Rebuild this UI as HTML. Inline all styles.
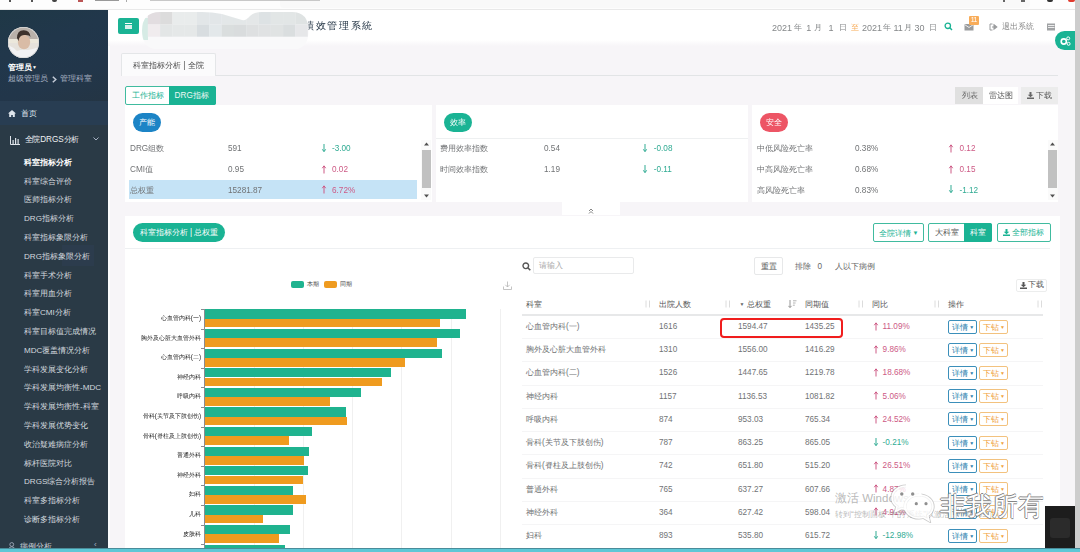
<!DOCTYPE html>
<html><head><meta charset="utf-8">
<style>
*{margin:0;padding:0;box-sizing:border-box}
html,body{width:1080px;height:552px;overflow:hidden;background:#f7f5f8;font-family:"Liberation Sans",sans-serif;color:#717375}
.a{position:absolute;white-space:nowrap}
.t{position:absolute;white-space:nowrap;line-height:12px;height:12px;font-size:8.2px;margin-top:1.1px}
#chrome{left:0;top:0;width:1080px;height:10px;background:#fdfdfd;border-bottom:1px solid #e9e9e9}
#side{left:0;top:10px;width:108px;height:542px;background:#2a3a46;overflow:hidden}
#prof{left:0;top:0;width:108px;height:90.5px;background:linear-gradient(160deg,#1f3846 0%,#21374b 35%,#22364a 70%,#243544 100%)}
#home{left:0;top:90.5px;width:108px;height:24.5px;background:#283d52}
.sm{position:absolute;left:24px;font-size:8.1px;line-height:12px;height:12px;color:#d3d9df;white-space:nowrap}
#nav{left:108px;top:10px;width:967px;height:36px;background:linear-gradient(#fff 0px,#fff 30px,#f7f5f8 36px)}
#rstrip{left:1074.5px;top:0px;width:5.5px;height:548px;background:#cdcdcd}
#task{left:0;top:547.5px;width:1080px;height:4.5px;background:#5ec7d6;border-top:1px solid #4a8c9a}
.card{position:absolute;top:105px;height:97px;background:#fff}
.pill{position:absolute;height:19px;line-height:19px;border-radius:10px;color:#fff;font-size:8.2px;text-align:center}
.up{color:#cd5a85}.dn{color:#1ab394}
.btn{position:absolute;border:1px solid #40bb9f;border-radius:2px;color:#1ab394;font-size:8.2px;text-align:center;background:#fff}
</style></head><body><div id="wrap" style="position:absolute;left:0;top:0;width:1080px;height:552px;filter:blur(0.45px)">
<div id="chrome" class="a"></div>
<div class="a" style="left:280px;top:0;width:750px;height:8px;background:#f9f9f9;border-radius:0 0 4px 4px"></div>
<div class="a" style="left:9px;top:0;width:1.5px;height:1.5px;background:#555"></div>
<div class="a" style="left:31px;top:0;width:2px;height:1.5px;background:#555"></div>
<div class="a" style="left:52px;top:0;width:5px;height:2px;background:#444;border-radius:0 0 3px 3px"></div>
<div class="a" style="left:78px;top:0;width:5px;height:1.5px;background:#b55"></div>
<div class="a" style="left:95px;top:0;width:24px;height:1.2px;background:#999"></div>
<div class="a" style="left:126px;top:0;width:1px;height:2px;background:#aaa"></div>
<div class="a" style="left:150px;top:0;width:170px;height:1px;background:#c8c8c8"></div>
<div class="a" style="left:1003px;top:0;width:2px;height:1.5px;background:#666"></div>
<div class="a" style="left:1021px;top:0;width:4px;height:1.5px;background:#666"></div>
<div class="a" style="left:1047px;top:0;width:6px;height:2px;background:#333;border-radius:0 0 3px 3px"></div>
<div class="a" style="left:1068px;top:0;width:7px;height:2px;background:#e03a2e;border-radius:0 0 4px 4px"></div>

<div id="side" class="a">
  <div id="prof" class="a"></div>
  <div id="home" class="a"></div>
  <svg class="a" style="left:8px;top:17px" width="31" height="31" viewBox="0 0 31 31">
    <defs><clipPath id="cc"><circle cx="15.5" cy="15.5" r="15.5"/></clipPath></defs>
    <g clip-path="url(#cc)">
      <rect width="31" height="31" fill="#e6e2dc"/>
      <rect x="0" y="0" width="31" height="12" fill="#b9b1aa"/>
      <rect x="0" y="12" width="31" height="4" fill="#ece8dc"/>
      <path d="M0 31V18Q5 20 9 24Q14 22 20 23Q26 22 31 20V31Z" fill="#f2f2f4"/>
      <ellipse cx="16" cy="15" rx="6.2" ry="7.3" fill="#d9bca6"/>
      <path d="M9 11Q9 3.5 15.5 3.2Q22 3 22.5 10Q21.5 7.5 16 8Q11 8.5 10.5 14Z" fill="#3d322c"/>
      <rect x="0" y="0" width="31" height="31" fill="none" stroke="#d8d8d8" stroke-width="1.5" rx="15.5"/>
    </g>
  </svg>
  <div class="a" style="left:8px;top:50.8px;font-size:8.2px;line-height:12px;color:#fff;font-weight:bold">管理员<span style="font-size:5px;font-weight:normal;vertical-align:1px">&#9660;</span></div>
  <div class="a" style="left:8px;top:62.8px;font-size:8px;line-height:12px;color:#a7b1c2">超级管理员</div><svg class="a" style="left:52px;top:65.5px" width="5" height="7" viewBox="0 0 5 7"><path d="M0.8 0.8L3.8 3.5L0.8 6.2" stroke="#c3cad6" stroke-width="1.5" fill="none"/></svg><div class="a" style="left:59.5px;top:62.8px;font-size:8px;line-height:12px;color:#a7b1c2">管理科室</div>
  <svg class="a" style="left:8px;top:100px" width="8" height="7" viewBox="0 0 8 7"><path d="M4 0L0 3.5h1.2V7h2V5h1.6v2h2V3.5H8Z" fill="#dfe5ec"/></svg>
  <div class="a" style="left:21px;top:98px;font-size:8.2px;line-height:12px;color:#dfe5ec">首页</div>
  <svg class="a" style="left:10px;top:126px" width="10" height="9" viewBox="0 0 10 9"><path d="M0.5 0v8.5H10" stroke="#dfe4ea" stroke-width="1" fill="none"/><rect x="2.5" y="4" width="1.2" height="4" fill="#dfe4ea"/><rect x="5" y="2" width="1.2" height="6" fill="#dfe4ea"/><rect x="7.5" y="3" width="1.2" height="5" fill="#dfe4ea"/></svg>
  <div class="a" style="left:24.5px;top:124.3px;font-size:8.2px;line-height:12px;color:#eef0f3;letter-spacing:-0.1px">全院DRGS分析</div>
  <svg class="a" style="left:93px;top:127px" width="6" height="4" viewBox="0 0 6 4"><path d="M0.5 0.5L3 3L5.5 0.5" stroke="#a7b1c2" stroke-width="1" fill="none"/></svg>
  <div class="a" style="left:62px;top:234.5px;width:32px;height:21.5px;background:#2c3c4d"></div>
  <div class="sm" style="top:146.80px;color:#fff;font-weight:bold">科室指标分析</div>
  <div class="sm" style="top:165.60px">科室综合评价</div>
  <div class="sm" style="top:184.40px">医师指标分析</div>
  <div class="sm" style="top:203.20px">DRG指标分析</div>
  <div class="sm" style="top:222.00px">科室指标象限分析</div>
  <div class="sm" style="top:240.80px">DRG指标象限分析</div>
  <div class="sm" style="top:259.60px">科室手术分析</div>
  <div class="sm" style="top:278.40px">科室用血分析</div>
  <div class="sm" style="top:297.20px">科室CMI分析</div>
  <div class="sm" style="top:316.00px">科室目标值完成情况</div>
  <div class="sm" style="top:334.80px">MDC覆盖情况分析</div>
  <div class="sm" style="top:353.60px">学科发展变化分析</div>
  <div class="sm" style="top:372.40px">学科发展均衡性-MDC</div>
  <div class="sm" style="top:391.20px">学科发展均衡性-科室</div>
  <div class="sm" style="top:410.00px">学科发展优势变化</div>
  <div class="sm" style="top:428.80px">收治疑难病症分析</div>
  <div class="sm" style="top:447.60px">标杆医院对比</div>
  <div class="sm" style="top:466.40px">DRGS综合分析报告</div>
  <div class="sm" style="top:485.20px">科室多指标分析</div>
  <div class="sm" style="top:504.00px">诊断多指标分析</div>
  <svg class="a" style="left:8px;top:532px" width="7.5" height="7.5" viewBox="0 0 9 9"><circle cx="4.5" cy="3" r="2.3" stroke="#a7b1c2" fill="none"/><path d="M0.8 9Q1 5.8 4.5 5.8Q8 5.8 8.2 9" stroke="#a7b1c2" fill="none"/></svg>
  <div class="a" style="left:19.5px;top:530px;font-size:8.3px;line-height:12px;color:#cfd5dc">病例分析</div>
  <div class="a" style="left:94px;top:529px;font-size:8px;line-height:12px;color:#a7b1c2">&#x2039;</div>
</div>
<div id="nav" class="a"></div>
<!-- hamburger -->
<div class="a" style="left:118px;top:18px;width:20.5px;height:16px;background:#1ab394;border-radius:2px"></div>
<div class="a" style="left:124.9px;top:22.6px;width:6.9px;height:1.4px;background:#fff"></div>
<div class="a" style="left:124.9px;top:25.3px;width:6.9px;height:3.7px;background:#d9efea"></div>
<div class="a" style="left:304.3px;top:19px;font-size:9.5px;line-height:14px;color:#263747;letter-spacing:1.6px">績效管理系統</div>
<!-- mosaic blur -->
<svg class="a" style="left:141.7px;top:11.7px" width="167" height="37.5" viewBox="0 0 167 37.5">
 <defs><clipPath id="mc"><path d="M18 0H60Q70 0 80 2Q90 5 100 8Q104 9 108 4Q112 0 120 0H150Q166.6 0 166.6 18.75Q166.6 37.5 150 37.5H18Q0 37.5 0 18.75Q0 0 18 0Z"/></clipPath>
 <filter id="mb"><feGaussianBlur stdDeviation="0.5"/></filter></defs>
 <g clip-path="url(#mc)" filter="url(#mb)">
  <rect width="167" height="37.5" fill="#f9f9fa"/>
  <rect x="0" y="6" width="6" height="22" fill="#d6ebe5"/>
  <rect x="5.8" y="0" width="12.4" height="12.5" fill="#e2dde0"/>
  <rect x="5.8" y="12.5" width="12.4" height="12.2" fill="#f0ecee"/>
  <rect x="18.1" y="0" width="12.4" height="12.5" fill="#dcdcdc"/>
  <rect x="18.1" y="12.5" width="12.4" height="12.2" fill="#e3e6e6"/>
  <rect x="30.4" y="0" width="12.4" height="12.5" fill="#e9ecec"/>
  <rect x="30.4" y="12.5" width="12.4" height="12.2" fill="#e5e8e8"/>
  <rect x="42.7" y="0" width="12.4" height="12.5" fill="#e9ecec"/>
  <rect x="42.7" y="12.5" width="12.4" height="12.2" fill="#e5e8e8"/>
  <rect x="55.0" y="0" width="12.4" height="12.5" fill="#e2e6e8"/>
  <rect x="55.0" y="12.5" width="12.4" height="12.2" fill="#d8dde0"/>
  <rect x="67.3" y="0" width="12.4" height="12.5" fill="#e2e6e8"/>
  <rect x="67.3" y="12.5" width="12.4" height="12.2" fill="#e3e8ea"/>
  <rect x="79.6" y="0" width="12.4" height="12.5" fill="#e3e7e8"/>
  <rect x="79.6" y="12.5" width="12.4" height="12.2" fill="#dadede"/>
  <rect x="91.9" y="0" width="12.4" height="12.5" fill="#e3e7e8"/>
  <rect x="91.9" y="12.5" width="12.4" height="12.2" fill="#d9dcdd"/>
  <rect x="104.2" y="0" width="12.4" height="12.5" fill="#e4e7e8"/>
  <rect x="104.2" y="12.5" width="12.4" height="12.2" fill="#dee0e1"/>
  <rect x="116.5" y="0" width="12.4" height="12.5" fill="#dde2e4"/>
  <rect x="116.5" y="12.5" width="12.4" height="12.2" fill="#e0e2e3"/>
  <rect x="128.8" y="0" width="12.4" height="12.5" fill="#e2e6e6"/>
  <rect x="128.8" y="12.5" width="12.4" height="12.2" fill="#e0e3e3"/>
  <rect x="141.1" y="0" width="12.4" height="12.5" fill="#e2e6e6"/>
  <rect x="141.1" y="12.5" width="12.4" height="12.2" fill="#dadedf"/>
  <rect x="153.4" y="0" width="12.4" height="12.5" fill="#dfe3e3"/>
  <rect x="153.4" y="12.5" width="12.4" height="12.2" fill="#e6e7e9"/>
 </g>
</svg>

<!-- date -->
<div class="a" style="left:772.0px;top:21.5px;font-size:9px;line-height:12px;color:#85888a">2021</div>
<div class="a" style="left:793.5px;top:21.5px;font-size:8.2px;line-height:12px;color:#85888a">年</div>
<div class="a" style="left:806.2px;top:21.5px;font-size:9px;line-height:12px;color:#85888a">1</div>
<div class="a" style="left:814.3px;top:21.5px;font-size:8.2px;line-height:12px;color:#85888a">月</div>
<div class="a" style="left:828.4px;top:21.5px;font-size:9px;line-height:12px;color:#85888a">1</div>
<div class="a" style="left:838.5px;top:21.5px;font-size:8.2px;line-height:12px;color:#85888a">日</div>
<div class="a" style="left:851.3px;top:21.5px;font-size:8.2px;line-height:12px;color:#f8ac59">至</div>
<div class="a" style="left:862.0px;top:21.5px;font-size:9px;line-height:12px;color:#85888a">2021</div>
<div class="a" style="left:882.5px;top:21.5px;font-size:8.2px;line-height:12px;color:#85888a">年</div>
<div class="a" style="left:893.5px;top:21.5px;font-size:9px;line-height:12px;color:#85888a">11</div>
<div class="a" style="left:903.9px;top:21.5px;font-size:8.2px;line-height:12px;color:#85888a">月</div>
<div class="a" style="left:914.5px;top:21.5px;font-size:9px;line-height:12px;color:#85888a">30</div>
<div class="a" style="left:929.0px;top:21.5px;font-size:8.2px;line-height:12px;color:#85888a">日</div>
<svg class="a" style="left:944px;top:22px" width="9" height="9" viewBox="0 0 9 9"><circle cx="3.8" cy="3.8" r="2.7" stroke="#1ab394" stroke-width="1.3" fill="none"/><path d="M5.8 5.8L8 8" stroke="#1ab394" stroke-width="1.5"/></svg>
<svg class="a" style="left:964px;top:23px" width="10" height="8" viewBox="0 0 10 8"><rect x="0.5" y="1" width="9" height="6.5" fill="#9a9c9e"/><path d="M0.5 1.5L5 4.5L9.5 1.5" stroke="#fff" stroke-width="0.8" fill="none"/></svg>
<div class="a" style="left:969.2px;top:16px;width:9.4px;height:8.8px;background:#f8ac59;border-radius:1px;color:#fff;font-size:7px;line-height:8.8px;text-align:center;letter-spacing:-0.5px">11</div>
<svg class="a" style="left:989px;top:22.5px" width="9" height="8" viewBox="0 0 9 8"><path d="M3.5 1H1V7H3.5" stroke="#9a9c9e" stroke-width="1" fill="none"/><path d="M3 4H6.5M5 1.8L7.8 4L5 6.2Z" stroke="#9a9c9e" stroke-width="1.1" fill="#9a9c9e"/></svg>
<div class="a" style="left:1001.5px;top:20.5px;font-size:8.2px;line-height:12px;color:#888">退出系统</div>
<svg class="a" style="left:1046.5px;top:22.5px" width="8.5" height="8" viewBox="0 0 8.5 8"><rect x="0" y="0.5" width="8.5" height="7" fill="#a0a2a4"/><rect x="1" y="2" width="6.5" height="0.8" fill="#fff"/><rect x="1" y="4.2" width="6.5" height="0.8" fill="#fff"/></svg>
<div class="a" style="left:1055px;top:31px;width:22px;height:19px;background:#1ab394;border-radius:10px 0 0 10px"></div>
<svg class="a" style="left:1060px;top:35.5px" width="11" height="10" viewBox="0 0 11 10"><circle cx="3.8" cy="5.5" r="2.6" stroke="#fff" stroke-width="1.6" fill="none"/><circle cx="8.2" cy="2.4" r="1.5" stroke="#fff" stroke-width="1" fill="none"/><circle cx="8.6" cy="7.8" r="1.5" stroke="#fff" stroke-width="1" fill="none"/></svg>
<div id="rstrip" class="a"></div>
<div class="a" style="left:108px;top:46px;width:2px;height:502px;background:#fbfcfe"></div>

<!-- cards -->
<div class="a" style="left:121px;top:53px;width:95px;height:23px;background:#fbfbfc;border:1px solid #e4e6e8;border-bottom:none;border-radius:2px 2px 0 0"></div>
<div class="a" style="left:216px;top:75px;width:842px;height:1px;background:#e2e4e6"></div>
<div class="a" style="left:133px;top:60px;font-size:8.2px;line-height:12px;color:#4a4a4a">科室指标分析 | 全院</div>
<div class="a" style="left:125px;top:86px;width:91px;height:18.5px;border:1px solid #40bb9f;border-radius:2px;background:#fff"></div>
<div class="a" style="left:169px;top:86px;width:47px;height:18.5px;background:#1ab394;border-radius:0 2px 2px 0"></div>
<div class="a" style="left:131.8px;top:90.2px;font-size:8.2px;line-height:12px;color:#1ab394">工作指标</div>
<div class="a" style="left:174.6px;top:90.2px;font-size:8.2px;line-height:12px;color:#eef8f5">DRG指标</div>
<!-- right btn -->
<div class="a" style="left:955px;top:86.5px;width:28px;height:17.5px;background:#e0e0e0"></div>
<div class="a" style="left:983px;top:86.5px;width:35px;height:17.5px;background:#fff"></div>
<div class="a" style="left:1021px;top:86.5px;width:37px;height:17.5px;background:#ececec"></div>
<div class="a" style="left:961.5px;top:89.8px;font-size:8.2px;line-height:12px;color:#666">列表</div>
<div class="a" style="left:988.5px;top:89.8px;font-size:8.2px;line-height:12px;color:#555">雷达图</div>
<svg class="a" style="left:1027px;top:91.5px" width="7" height="7" viewBox="0 0 7 7"><path d="M2.5 0h2v2.8h1.8L3.5 5.2L0.7 2.8h1.8Z M0 5.5h7V7H0Z" fill="#666"/></svg>
<div class="a" style="left:1036px;top:89.5px;font-size:8.2px;line-height:12px;color:#555">下载</div>

<div class="card" style="left:125px;width:307px"></div>
<div class="card" style="left:436px;width:312px"></div>
<div class="card" style="left:752px;width:306px"></div>
<div class="pill" style="left:133px;top:113px;width:28px;background:#1c84c6">产能</div>
<div class="pill" style="left:444px;top:113px;width:28px;background:#1ab394">效率</div>
<div class="pill" style="left:760px;top:113px;width:28px;background:#ed5565">安全</div>
<div class="a" style="left:436px;top:138px;width:312px;height:1px;background:#eef0f1"></div>
<div class="a" style="left:128.5px;top:179.7px;width:288px;height:19.5px;background:#c5e3f6"></div>
<div class="t" style="left:130px;top:142.4px">DRG组数</div><div class="t" style="left:228px;top:142.4px">591</div><svg class="a" style="left:320.7px;top:144.20px" width="6" height="9" viewBox="0 0 6 9"><path d="M3 0V7.3M1.3 5.3L3 7.7L4.7 5.3" stroke="#30ab93" stroke-width="1" fill="none"/></svg><div class="t" style="left:332px;top:142.4px;color:#30ab93">-3.00</div><div class="t" style="left:130px;top:163.0px">CMI值</div><div class="t" style="left:228px;top:163.0px">0.95</div><svg class="a" style="left:320.7px;top:164.80px" width="6" height="9" viewBox="0 0 6 9"><path d="M3 8.5V1.2M1.3 3.2L3 0.8L4.7 3.2" stroke="#cd5a85" stroke-width="1" fill="none"/></svg><div class="t" style="left:332px;top:163.0px;color:#cd5a85">0.02</div><div class="t" style="left:130px;top:183.5px">总权重</div><div class="t" style="left:228px;top:183.5px">15281.87</div><svg class="a" style="left:320.7px;top:185.30px" width="6" height="9" viewBox="0 0 6 9"><path d="M3 8.5V1.2M1.3 3.2L3 0.8L4.7 3.2" stroke="#cd5a85" stroke-width="1" fill="none"/></svg><div class="t" style="left:332px;top:183.5px;color:#cd5a85">6.72%</div><div class="t" style="left:440px;top:142.4px">费用效率指数</div><div class="t" style="left:544px;top:142.4px">0.54</div><svg class="a" style="left:642.3px;top:144.20px" width="6" height="9" viewBox="0 0 6 9"><path d="M3 0V7.3M1.3 5.3L3 7.7L4.7 5.3" stroke="#30ab93" stroke-width="1" fill="none"/></svg><div class="t" style="left:653.8px;top:142.4px;color:#30ab93">-0.08</div><div class="t" style="left:440px;top:163.0px">时间效率指数</div><div class="t" style="left:544px;top:163.0px">1.19</div><svg class="a" style="left:642.3px;top:164.80px" width="6" height="9" viewBox="0 0 6 9"><path d="M3 0V7.3M1.3 5.3L3 7.7L4.7 5.3" stroke="#30ab93" stroke-width="1" fill="none"/></svg><div class="t" style="left:653.8px;top:163.0px;color:#30ab93">-0.11</div><div class="t" style="left:756.5px;top:142.4px">中低风险死亡率</div><div class="t" style="left:855px;top:142.4px">0.38%</div><svg class="a" style="left:947.5px;top:144.20px" width="6" height="9" viewBox="0 0 6 9"><path d="M3 8.5V1.2M1.3 3.2L3 0.8L4.7 3.2" stroke="#cd5a85" stroke-width="1" fill="none"/></svg><div class="t" style="left:959.5px;top:142.4px;color:#cd5a85">0.12</div><div class="t" style="left:756.5px;top:163.0px">中高风险死亡率</div><div class="t" style="left:855px;top:163.0px">0.68%</div><svg class="a" style="left:947.5px;top:164.80px" width="6" height="9" viewBox="0 0 6 9"><path d="M3 8.5V1.2M1.3 3.2L3 0.8L4.7 3.2" stroke="#cd5a85" stroke-width="1" fill="none"/></svg><div class="t" style="left:959.5px;top:163.0px;color:#cd5a85">0.15</div><div class="t" style="left:756.5px;top:183.5px">高风险死亡率</div><div class="t" style="left:855px;top:183.5px">0.83%</div><svg class="a" style="left:947.5px;top:185.30px" width="6" height="9" viewBox="0 0 6 9"><path d="M3 0V7.3M1.3 5.3L3 7.7L4.7 5.3" stroke="#30ab93" stroke-width="1" fill="none"/></svg><div class="t" style="left:959.5px;top:183.5px;color:#30ab93">-1.12</div>
<!-- scrollbars -->
<div class="a" style="left:421px;top:140px;width:10px;height:60px;background:#fafafa"></div>
<div class="a" style="left:421.5px;top:149.5px;width:9px;height:38.5px;background:#c1c1c1"></div>
<svg class="a" style="left:423.5px;top:142px" width="5" height="4"><path d="M0 3.5L2.5 0.5L5 3.5Z" fill="#505050"/></svg>
<svg class="a" style="left:423.5px;top:194px" width="5" height="4"><path d="M0 0.5L2.5 3.5L5 0.5Z" fill="#505050"/></svg>
<div class="a" style="left:1047.5px;top:140px;width:10px;height:60px;background:#fafafa"></div>
<div class="a" style="left:1048px;top:150px;width:9px;height:37.5px;background:#c1c1c1"></div>
<svg class="a" style="left:1050px;top:142px" width="5" height="4"><path d="M0 3.5L2.5 0.5L5 3.5Z" fill="#505050"/></svg>
<svg class="a" style="left:1050px;top:194px" width="5" height="4"><path d="M0 0.5L2.5 3.5L5 0.5Z" fill="#505050"/></svg>
<!-- collapse tab -->
<div class="a" style="left:562px;top:202px;width:58px;height:13px;background:#fff"></div>
<svg class="a" style="left:588px;top:208px" width="6" height="6" viewBox="0 0 6 6"><path d="M1 3L3 1L5 3M1 5.5L3 3.5L5 5.5" stroke="#777" stroke-width="0.9" fill="none"/></svg>
<!-- chart panel -->
<div class="a" style="left:125px;top:216px;width:934.5px;height:332px;background:#fff"></div>
<!-- panel header -->
<div class="pill" style="left:133.3px;top:223.2px;width:91.5px;height:19px;background:#1ab394;font-size:8.2px">科室指标分析 | 总权重</div>
<div class="a" style="left:125px;top:248px;width:925px;height:1px;background:#eef0f2"></div>
<div class="btn" style="left:873.3px;top:223.3px;width:50.6px;height:18.5px;line-height:18.6px">全院详情<span style="font-size:6px;vertical-align:1px"> &#9660;</span></div>
<div class="btn" style="left:928px;top:223.3px;width:64px;height:18.5px;line-height:18.6px;text-align:left;padding-left:5.8px;color:#555">大科室</div>
<div class="a" style="left:964px;top:223.3px;width:28px;height:18.5px;background:#1ab394;border-radius:0 2px 2px 0;color:#fff;font-size:8.2px;line-height:19.5px;text-align:center">科室</div>
<div class="btn" style="left:996.7px;top:223.3px;width:54px;height:18.5px;line-height:18.6px;padding-left:9px">全部指标</div>
<svg class="a" style="left:1002.5px;top:229px" width="7" height="7" viewBox="0 0 7 7"><path d="M2.5 0h2v2.8h1.8L3.5 5.2L0.7 2.8h1.8Z M0 5.6h7V7H0Z" fill="#1ab394"/></svg>
<!-- search -->
<svg class="a" style="left:521.5px;top:261.5px" width="9" height="9" viewBox="0 0 9 9"><circle cx="3.8" cy="3.8" r="2.8" stroke="#555" stroke-width="1.4" fill="none"/><path d="M5.8 5.8L8.3 8.3" stroke="#555" stroke-width="1.6"/></svg>
<div class="a" style="left:533px;top:256.5px;width:101px;height:17.5px;border:1px solid #e9eaeb;border-radius:2px"></div>
<div class="a" style="left:539px;top:260.2px;font-size:8.2px;line-height:12px;color:#a9a9a9">请输入</div>
<div class="a" style="left:754.4px;top:256.5px;width:29px;height:18.5px;border:1px solid #e7e8e9;border-radius:2px"></div>
<div class="a" style="left:760.5px;top:261.2px;font-size:8.2px;line-height:12px;color:#555">重置</div>
<div class="a" style="left:794.6px;top:261.2px;font-size:8.2px;line-height:12px;color:#666">排除</div>
<div class="a" style="left:817.4px;top:261.2px;font-size:8.2px;line-height:12px;color:#666">0</div>
<div class="a" style="left:835px;top:261.2px;font-size:8.2px;line-height:12px;color:#666">人以下病例</div>
<div class="a" style="left:1016px;top:278.5px;width:31.4px;height:13px;border:1px solid #eceded;border-radius:2px"></div>
<svg class="a" style="left:1019.5px;top:281.5px" width="7" height="7" viewBox="0 0 7 7"><path d="M2.5 0h2v2.8h1.8L3.5 5.2L0.7 2.8h1.8Z M0 5.6h7V7H0Z" fill="#555"/></svg>
<div class="a" style="left:1028px;top:279px;font-size:8.2px;line-height:12px;color:#555">下载</div>

<div class="a" style="left:522px;top:314px;width:521px;height:1.5px;background:#e7e8e9"></div>
<div class="t" style="left:526px;top:297.6px;color:#555">科室</div>
<div class="t" style="left:659px;top:297.6px;color:#555">出院人数</div>
<div class="t" style="left:747.4px;top:297.6px;color:#555">总权重</div>
<div class="t" style="left:805px;top:297.6px;color:#555">同期值</div>
<div class="t" style="left:872.4px;top:297.6px;color:#555">同比</div>
<div class="t" style="left:948.3px;top:297.6px;color:#555">操作</div>
<div class="a" style="left:739.5px;top:301px;font-size:5px;line-height:6px;color:#666">&#9660;</div>
<svg class="a" style="left:644px;top:300px" width="8" height="8" viewBox="0 0 8 8"><path d="M2 0.5V7.5M5.5 0.5V7.5" stroke="#dcdcdc" stroke-width="1"/></svg>
<svg class="a" style="left:723.5px;top:300px" width="8" height="8" viewBox="0 0 8 8"><path d="M2 0.5V7.5M5.5 0.5V7.5" stroke="#dcdcdc" stroke-width="1"/></svg>
<svg class="a" style="left:857px;top:300px" width="8" height="8" viewBox="0 0 8 8"><path d="M2 0.5V7.5M5.5 0.5V7.5" stroke="#dcdcdc" stroke-width="1"/></svg>
<svg class="a" style="left:932.5px;top:300px" width="8" height="8" viewBox="0 0 8 8"><path d="M2 0.5V7.5M5.5 0.5V7.5" stroke="#dcdcdc" stroke-width="1"/></svg>
<svg class="a" style="left:1036px;top:300px" width="8" height="8" viewBox="0 0 8 8"><path d="M2 0.5V7.5M5.5 0.5V7.5" stroke="#dcdcdc" stroke-width="1"/></svg>
<svg class="a" style="left:788.3px;top:300px" width="9" height="8" viewBox="0 0 9 8"><path d="M2 0V7.5M0.3 5.8L2 7.5L3.7 5.8" stroke="#8a8a8a" stroke-width="0.9" fill="none"/><path d="M5 0.8H8.5M5 3H7.6M5 5.2H6.8" stroke="#aaa" stroke-width="0.9"/></svg>
<div class="t" style="left:526px;top:319.80px">心血管内科(一)</div>
<div class="t" style="left:659px;top:319.80px">1616</div>
<div class="t" style="left:738px;top:319.80px">1594.47</div>
<div class="t" style="left:805px;top:319.80px">1435.25</div>
<svg class="a" style="left:873.0px;top:321.60px" width="6" height="9" viewBox="0 0 6 9"><path d="M3 8.5V1.2M1.3 3.2L3 0.8L4.7 3.2" stroke="#cd5a85" stroke-width="1" fill="none"/></svg>
<div class="t" style="left:882.6px;top:319.80px;color:#cd5a85">11.09%</div>
<div class="a" style="left:948.3px;top:319.50px;width:28.4px;height:14px;border:1px solid #3b8fba;border-radius:2px;color:#2a7fae;font-size:8.2px;line-height:12px;padding-left:2.5px">详情<span style="font-size:5px;vertical-align:1px"> &#9660;</span></div>
<div class="a" style="left:979px;top:319.50px;width:28.7px;height:14px;border:1px solid #f3c27e;border-radius:2px;color:#f0a23c;font-size:8.2px;line-height:12px;padding-left:2.5px">下钻<span style="font-size:5px;vertical-align:1px"> &#9660;</span></div>
<div class="a" style="left:522px;top:338.23px;width:521px;height:1px;background:#f5f5f6"></div>
<div class="t" style="left:526px;top:343.03px">胸外及心脏大血管外科</div>
<div class="t" style="left:659px;top:343.03px">1310</div>
<div class="t" style="left:738px;top:343.03px">1556.00</div>
<div class="t" style="left:805px;top:343.03px">1416.29</div>
<svg class="a" style="left:873.0px;top:344.83px" width="6" height="9" viewBox="0 0 6 9"><path d="M3 8.5V1.2M1.3 3.2L3 0.8L4.7 3.2" stroke="#cd5a85" stroke-width="1" fill="none"/></svg>
<div class="t" style="left:882.6px;top:343.03px;color:#cd5a85">9.86%</div>
<div class="a" style="left:948.3px;top:342.73px;width:28.4px;height:14px;border:1px solid #3b8fba;border-radius:2px;color:#2a7fae;font-size:8.2px;line-height:12px;padding-left:2.5px">详情<span style="font-size:5px;vertical-align:1px"> &#9660;</span></div>
<div class="a" style="left:979px;top:342.73px;width:28.7px;height:14px;border:1px solid #f3c27e;border-radius:2px;color:#f0a23c;font-size:8.2px;line-height:12px;padding-left:2.5px">下钻<span style="font-size:5px;vertical-align:1px"> &#9660;</span></div>
<div class="a" style="left:522px;top:361.46px;width:521px;height:1px;background:#f5f5f6"></div>
<div class="t" style="left:526px;top:366.26px">心血管内科(二)</div>
<div class="t" style="left:659px;top:366.26px">1526</div>
<div class="t" style="left:738px;top:366.26px">1447.65</div>
<div class="t" style="left:805px;top:366.26px">1219.78</div>
<svg class="a" style="left:873.0px;top:368.06px" width="6" height="9" viewBox="0 0 6 9"><path d="M3 8.5V1.2M1.3 3.2L3 0.8L4.7 3.2" stroke="#cd5a85" stroke-width="1" fill="none"/></svg>
<div class="t" style="left:882.6px;top:366.26px;color:#cd5a85">18.68%</div>
<div class="a" style="left:948.3px;top:365.96px;width:28.4px;height:14px;border:1px solid #3b8fba;border-radius:2px;color:#2a7fae;font-size:8.2px;line-height:12px;padding-left:2.5px">详情<span style="font-size:5px;vertical-align:1px"> &#9660;</span></div>
<div class="a" style="left:979px;top:365.96px;width:28.7px;height:14px;border:1px solid #f3c27e;border-radius:2px;color:#f0a23c;font-size:8.2px;line-height:12px;padding-left:2.5px">下钻<span style="font-size:5px;vertical-align:1px"> &#9660;</span></div>
<div class="a" style="left:522px;top:384.69px;width:521px;height:1px;background:#f5f5f6"></div>
<div class="t" style="left:526px;top:389.49px">神经内科</div>
<div class="t" style="left:659px;top:389.49px">1157</div>
<div class="t" style="left:738px;top:389.49px">1136.53</div>
<div class="t" style="left:805px;top:389.49px">1081.82</div>
<svg class="a" style="left:873.0px;top:391.29px" width="6" height="9" viewBox="0 0 6 9"><path d="M3 8.5V1.2M1.3 3.2L3 0.8L4.7 3.2" stroke="#cd5a85" stroke-width="1" fill="none"/></svg>
<div class="t" style="left:882.6px;top:389.49px;color:#cd5a85">5.06%</div>
<div class="a" style="left:948.3px;top:389.19px;width:28.4px;height:14px;border:1px solid #3b8fba;border-radius:2px;color:#2a7fae;font-size:8.2px;line-height:12px;padding-left:2.5px">详情<span style="font-size:5px;vertical-align:1px"> &#9660;</span></div>
<div class="a" style="left:979px;top:389.19px;width:28.7px;height:14px;border:1px solid #f3c27e;border-radius:2px;color:#f0a23c;font-size:8.2px;line-height:12px;padding-left:2.5px">下钻<span style="font-size:5px;vertical-align:1px"> &#9660;</span></div>
<div class="a" style="left:522px;top:407.92px;width:521px;height:1px;background:#f5f5f6"></div>
<div class="t" style="left:526px;top:412.72px">呼吸内科</div>
<div class="t" style="left:659px;top:412.72px">874</div>
<div class="t" style="left:738px;top:412.72px">953.03</div>
<div class="t" style="left:805px;top:412.72px">765.34</div>
<svg class="a" style="left:873.0px;top:414.52px" width="6" height="9" viewBox="0 0 6 9"><path d="M3 8.5V1.2M1.3 3.2L3 0.8L4.7 3.2" stroke="#cd5a85" stroke-width="1" fill="none"/></svg>
<div class="t" style="left:882.6px;top:412.72px;color:#cd5a85">24.52%</div>
<div class="a" style="left:948.3px;top:412.42px;width:28.4px;height:14px;border:1px solid #3b8fba;border-radius:2px;color:#2a7fae;font-size:8.2px;line-height:12px;padding-left:2.5px">详情<span style="font-size:5px;vertical-align:1px"> &#9660;</span></div>
<div class="a" style="left:979px;top:412.42px;width:28.7px;height:14px;border:1px solid #f3c27e;border-radius:2px;color:#f0a23c;font-size:8.2px;line-height:12px;padding-left:2.5px">下钻<span style="font-size:5px;vertical-align:1px"> &#9660;</span></div>
<div class="a" style="left:522px;top:431.15px;width:521px;height:1px;background:#f5f5f6"></div>
<div class="t" style="left:526px;top:435.95px">骨科(关节及下肢创伤)</div>
<div class="t" style="left:659px;top:435.95px">787</div>
<div class="t" style="left:738px;top:435.95px">863.25</div>
<div class="t" style="left:805px;top:435.95px">865.05</div>
<svg class="a" style="left:873.0px;top:437.75px" width="6" height="9" viewBox="0 0 6 9"><path d="M3 0V7.3M1.3 5.3L3 7.7L4.7 5.3" stroke="#30ab93" stroke-width="1" fill="none"/></svg>
<div class="t" style="left:882.6px;top:435.95px;color:#30ab93">-0.21%</div>
<div class="a" style="left:948.3px;top:435.65px;width:28.4px;height:14px;border:1px solid #3b8fba;border-radius:2px;color:#2a7fae;font-size:8.2px;line-height:12px;padding-left:2.5px">详情<span style="font-size:5px;vertical-align:1px"> &#9660;</span></div>
<div class="a" style="left:979px;top:435.65px;width:28.7px;height:14px;border:1px solid #f3c27e;border-radius:2px;color:#f0a23c;font-size:8.2px;line-height:12px;padding-left:2.5px">下钻<span style="font-size:5px;vertical-align:1px"> &#9660;</span></div>
<div class="a" style="left:522px;top:454.38px;width:521px;height:1px;background:#f5f5f6"></div>
<div class="t" style="left:526px;top:459.18px">骨科(脊柱及上肢创伤)</div>
<div class="t" style="left:659px;top:459.18px">742</div>
<div class="t" style="left:738px;top:459.18px">651.80</div>
<div class="t" style="left:805px;top:459.18px">515.20</div>
<svg class="a" style="left:873.0px;top:460.98px" width="6" height="9" viewBox="0 0 6 9"><path d="M3 8.5V1.2M1.3 3.2L3 0.8L4.7 3.2" stroke="#cd5a85" stroke-width="1" fill="none"/></svg>
<div class="t" style="left:882.6px;top:459.18px;color:#cd5a85">26.51%</div>
<div class="a" style="left:948.3px;top:458.88px;width:28.4px;height:14px;border:1px solid #3b8fba;border-radius:2px;color:#2a7fae;font-size:8.2px;line-height:12px;padding-left:2.5px">详情<span style="font-size:5px;vertical-align:1px"> &#9660;</span></div>
<div class="a" style="left:979px;top:458.88px;width:28.7px;height:14px;border:1px solid #f3c27e;border-radius:2px;color:#f0a23c;font-size:8.2px;line-height:12px;padding-left:2.5px">下钻<span style="font-size:5px;vertical-align:1px"> &#9660;</span></div>
<div class="a" style="left:522px;top:477.61px;width:521px;height:1px;background:#f5f5f6"></div>
<div class="t" style="left:526px;top:482.41px">普通外科</div>
<div class="t" style="left:659px;top:482.41px">765</div>
<div class="t" style="left:738px;top:482.41px">637.27</div>
<div class="t" style="left:805px;top:482.41px">607.66</div>
<svg class="a" style="left:873.0px;top:484.21px" width="6" height="9" viewBox="0 0 6 9"><path d="M3 8.5V1.2M1.3 3.2L3 0.8L4.7 3.2" stroke="#cd5a85" stroke-width="1" fill="none"/></svg>
<div class="t" style="left:882.6px;top:482.41px;color:#cd5a85">4.87%</div>
<div class="a" style="left:948.3px;top:482.11px;width:28.4px;height:14px;border:1px solid #3b8fba;border-radius:2px;color:#2a7fae;font-size:8.2px;line-height:12px;padding-left:2.5px">详情<span style="font-size:5px;vertical-align:1px"> &#9660;</span></div>
<div class="a" style="left:979px;top:482.11px;width:28.7px;height:14px;border:1px solid #f3c27e;border-radius:2px;color:#f0a23c;font-size:8.2px;line-height:12px;padding-left:2.5px">下钻<span style="font-size:5px;vertical-align:1px"> &#9660;</span></div>
<div class="a" style="left:522px;top:500.84px;width:521px;height:1px;background:#f5f5f6"></div>
<div class="t" style="left:526px;top:505.64px">神经外科</div>
<div class="t" style="left:659px;top:505.64px">364</div>
<div class="t" style="left:738px;top:505.64px">627.42</div>
<div class="t" style="left:805px;top:505.64px">598.04</div>
<svg class="a" style="left:873.0px;top:507.44px" width="6" height="9" viewBox="0 0 6 9"><path d="M3 8.5V1.2M1.3 3.2L3 0.8L4.7 3.2" stroke="#cd5a85" stroke-width="1" fill="none"/></svg>
<div class="t" style="left:882.6px;top:505.64px;color:#cd5a85">4.91%</div>
<div class="a" style="left:948.3px;top:505.34px;width:28.4px;height:14px;border:1px solid #3b8fba;border-radius:2px;color:#2a7fae;font-size:8.2px;line-height:12px;padding-left:2.5px">详情<span style="font-size:5px;vertical-align:1px"> &#9660;</span></div>
<div class="a" style="left:979px;top:505.34px;width:28.7px;height:14px;border:1px solid #f3c27e;border-radius:2px;color:#f0a23c;font-size:8.2px;line-height:12px;padding-left:2.5px">下钻<span style="font-size:5px;vertical-align:1px"> &#9660;</span></div>
<div class="a" style="left:522px;top:524.07px;width:521px;height:1px;background:#f5f5f6"></div>
<div class="t" style="left:526px;top:528.87px">妇科</div>
<div class="t" style="left:659px;top:528.87px">893</div>
<div class="t" style="left:738px;top:528.87px">535.80</div>
<div class="t" style="left:805px;top:528.87px">615.72</div>
<svg class="a" style="left:873.0px;top:530.67px" width="6" height="9" viewBox="0 0 6 9"><path d="M3 0V7.3M1.3 5.3L3 7.7L4.7 5.3" stroke="#30ab93" stroke-width="1" fill="none"/></svg>
<div class="t" style="left:882.6px;top:528.87px;color:#30ab93">-12.98%</div>
<div class="a" style="left:948.3px;top:528.57px;width:28.4px;height:14px;border:1px solid #3b8fba;border-radius:2px;color:#2a7fae;font-size:8.2px;line-height:12px;padding-left:2.5px">详情<span style="font-size:5px;vertical-align:1px"> &#9660;</span></div>
<div class="a" style="left:979px;top:528.57px;width:28.7px;height:14px;border:1px solid #f3c27e;border-radius:2px;color:#f0a23c;font-size:8.2px;line-height:12px;padding-left:2.5px">下钻<span style="font-size:5px;vertical-align:1px"> &#9660;</span></div>
<div class="a" style="left:720px;top:318.2px;width:123px;height:19.5px;border:2.6px solid #f01d1d;border-radius:4px"></div>
<div class="a" style="left:291px;top:281px;width:13px;height:6.6px;background:#1fb38f;border-radius:2px"></div>
<div class="a" style="left:306.5px;top:280px;font-size:6px;line-height:8px;color:#444">本期</div>
<div class="a" style="left:324px;top:281px;width:13px;height:6.6px;background:#ef9b1f;border-radius:2px"></div>
<div class="a" style="left:339.5px;top:280px;font-size:6px;line-height:8px;color:#444">同期</div>
<svg class="a" style="left:502.5px;top:281px" width="9" height="9" viewBox="0 0 9 9"><path d="M4.5 0.5V6M2.3 3.8L4.5 6L6.7 3.8M0.5 5.5V8.5H8.5V5.5" stroke="#b5b5b5" stroke-width="0.8" fill="none"/></svg>
<div class="a" style="left:254.10px;top:309px;width:1px;height:239px;background:#f0f0f0"></div>
<div class="a" style="left:303.20px;top:309px;width:1px;height:239px;background:#f0f0f0"></div>
<div class="a" style="left:352.30px;top:309px;width:1px;height:239px;background:#f0f0f0"></div>
<div class="a" style="left:401.40px;top:309px;width:1px;height:239px;background:#f0f0f0"></div>
<div class="a" style="left:450.50px;top:309px;width:1px;height:239px;background:#f0f0f0"></div>
<div class="a" style="left:499.60px;top:309px;width:1px;height:239px;background:#f0f0f0"></div>
<div class="a" style="left:204px;top:309px;width:1px;height:239px;background:#8a8c92"></div>
<div class="a" style="left:201px;top:309.00px;width:4px;height:1px;background:#8a8c92"></div>
<div class="a" style="left:205px;top:309.40px;width:260.96px;height:9.2px;background:#1fb38f"></div>
<div class="a" style="left:205px;top:318.70px;width:234.90px;height:8.8px;background:#ef9b1f"></div>
<div class="a" style="right:879.00px;top:313.90px;font-size:6.3px;line-height:8px;color:#222;text-align:right">心血管内科(一)</div>
<div class="a" style="left:201px;top:328.60px;width:4px;height:1px;background:#8a8c92"></div>
<div class="a" style="left:205px;top:329.00px;width:254.67px;height:9.2px;background:#1fb38f"></div>
<div class="a" style="left:205px;top:338.30px;width:231.80px;height:8.8px;background:#ef9b1f"></div>
<div class="a" style="right:879.00px;top:333.50px;font-size:6.3px;line-height:8px;color:#222;text-align:right">胸外及心脏大血管外科</div>
<div class="a" style="left:201px;top:348.20px;width:4px;height:1px;background:#8a8c92"></div>
<div class="a" style="left:205px;top:348.60px;width:236.93px;height:9.2px;background:#1fb38f"></div>
<div class="a" style="left:205px;top:357.90px;width:199.64px;height:8.8px;background:#ef9b1f"></div>
<div class="a" style="right:879.00px;top:353.10px;font-size:6.3px;line-height:8px;color:#222;text-align:right">心血管内科(二)</div>
<div class="a" style="left:201px;top:367.80px;width:4px;height:1px;background:#8a8c92"></div>
<div class="a" style="left:205px;top:368.20px;width:186.01px;height:9.2px;background:#1fb38f"></div>
<div class="a" style="left:205px;top:377.50px;width:177.06px;height:8.8px;background:#ef9b1f"></div>
<div class="a" style="right:879.00px;top:372.70px;font-size:6.3px;line-height:8px;color:#222;text-align:right">神经内科</div>
<div class="a" style="left:201px;top:387.40px;width:4px;height:1px;background:#8a8c92"></div>
<div class="a" style="left:205px;top:387.80px;width:155.98px;height:9.2px;background:#1fb38f"></div>
<div class="a" style="left:205px;top:397.10px;width:125.26px;height:8.8px;background:#ef9b1f"></div>
<div class="a" style="right:879.00px;top:392.30px;font-size:6.3px;line-height:8px;color:#222;text-align:right">呼吸内科</div>
<div class="a" style="left:201px;top:407.00px;width:4px;height:1px;background:#8a8c92"></div>
<div class="a" style="left:205px;top:407.40px;width:141.29px;height:9.2px;background:#1fb38f"></div>
<div class="a" style="left:205px;top:416.70px;width:141.58px;height:8.8px;background:#ef9b1f"></div>
<div class="a" style="right:879.00px;top:411.90px;font-size:6.3px;line-height:8px;color:#222;text-align:right">骨科(关节及下肢创伤)</div>
<div class="a" style="left:201px;top:426.60px;width:4px;height:1px;background:#8a8c92"></div>
<div class="a" style="left:205px;top:427.00px;width:106.68px;height:9.2px;background:#1fb38f"></div>
<div class="a" style="left:205px;top:436.30px;width:84.32px;height:8.8px;background:#ef9b1f"></div>
<div class="a" style="right:879.00px;top:431.50px;font-size:6.3px;line-height:8px;color:#222;text-align:right">骨科(脊柱及上肢创伤)</div>
<div class="a" style="left:201px;top:446.20px;width:4px;height:1px;background:#8a8c92"></div>
<div class="a" style="left:205px;top:446.60px;width:104.30px;height:9.2px;background:#1fb38f"></div>
<div class="a" style="left:205px;top:455.90px;width:99.45px;height:8.8px;background:#ef9b1f"></div>
<div class="a" style="right:879.00px;top:451.10px;font-size:6.3px;line-height:8px;color:#222;text-align:right">普通外科</div>
<div class="a" style="left:201px;top:465.80px;width:4px;height:1px;background:#8a8c92"></div>
<div class="a" style="left:205px;top:466.20px;width:102.69px;height:9.2px;background:#1fb38f"></div>
<div class="a" style="left:205px;top:475.50px;width:97.88px;height:8.8px;background:#ef9b1f"></div>
<div class="a" style="right:879.00px;top:470.70px;font-size:6.3px;line-height:8px;color:#222;text-align:right">神经外科</div>
<div class="a" style="left:201px;top:485.40px;width:4px;height:1px;background:#8a8c92"></div>
<div class="a" style="left:205px;top:485.80px;width:87.69px;height:9.2px;background:#1fb38f"></div>
<div class="a" style="left:205px;top:495.10px;width:100.77px;height:8.8px;background:#ef9b1f"></div>
<div class="a" style="right:879.00px;top:490.30px;font-size:6.3px;line-height:8px;color:#222;text-align:right">妇科</div>
<div class="a" style="left:201px;top:505.00px;width:4px;height:1px;background:#8a8c92"></div>
<div class="a" style="left:205px;top:505.40px;width:87.89px;height:9.2px;background:#1fb38f"></div>
<div class="a" style="left:205px;top:514.70px;width:57.77px;height:8.8px;background:#ef9b1f"></div>
<div class="a" style="right:879.00px;top:509.90px;font-size:6.3px;line-height:8px;color:#222;text-align:right">儿科</div>
<div class="a" style="left:201px;top:524.60px;width:4px;height:1px;background:#8a8c92"></div>
<div class="a" style="left:205px;top:525.00px;width:85.11px;height:9.2px;background:#1fb38f"></div>
<div class="a" style="left:205px;top:534.30px;width:74.30px;height:8.8px;background:#ef9b1f"></div>
<div class="a" style="right:879.00px;top:529.50px;font-size:6.3px;line-height:8px;color:#222;text-align:right">皮肤科</div>
<div class="a" style="left:201px;top:544.20px;width:4px;height:1px;background:#8a8c92"></div>
<div class="a" style="left:205px;top:544.60px;width:80.36px;height:9.2px;background:#1fb38f"></div>
<div class="a" style="left:205px;top:553.90px;width:49.10px;height:8.8px;background:#ef9b1f"></div>
<!-- watermark -->
<div class="a" style="left:835px;top:490.5px;font-size:11.5px;line-height:15px;color:rgba(110,110,110,0.5)">激活 Windows</div>
<div class="a" style="left:835px;top:509px;font-size:8.4px;line-height:11px;color:rgba(110,110,110,0.5)">转到“控制面板”中的“系统”以激活 Windows。</div>
<svg class="a" style="left:889px;top:483px" width="48" height="40" viewBox="0 0 48 40">
  <g stroke="#8a8a8a" stroke-width="3.2" fill="none" opacity="0.45">
    <path d="M17 3C9 3 3 8.5 3 15C3 18.5 5 21.5 8 23.5L6.5 28.5L12.5 25.5C14 26 15.5 26.3 17 26.5"/>
    <path d="M30 12C21.5 12 16 17.5 16 23.5C16 29.5 21.5 35 30 35C31.5 35 33 34.8 34.5 34.3L40 37.5L38.8 32.5C41.8 30.5 44 27.3 44 23.5C44 17.5 38.5 12 30 12Z"/>
  </g>
  <path d="M17 3C9 3 3 8.5 3 15C3 18.5 5 21.5 8 23.5L6.5 28.5L12.5 25.5C14 26 15.5 26.3 17 26.5C16.3 25.5 16 24.5 16 23.5C16 17.5 21.5 12 30 12C31 12 31.5 12 32 12.2C30.5 6.5 24.5 3 17 3Z" fill="rgba(255,255,255,0.75)" stroke="#fff" stroke-width="1.6"/>
  <path d="M30 12C21.5 12 16 17.5 16 23.5C16 29.5 21.5 35 30 35C31.5 35 33 34.8 34.5 34.3L40 37.5L38.8 32.5C41.8 30.5 44 27.3 44 23.5C44 17.5 38.5 12 30 12Z" fill="rgba(255,255,255,0.75)" stroke="#fff" stroke-width="1.6"/>
  <circle cx="12.8" cy="11" r="1.7" fill="#8f8f8f"/><circle cx="23.7" cy="11" r="1.7" fill="#8f8f8f"/>
  <circle cx="27.3" cy="20.7" r="1.6" fill="#8f8f8f"/><circle cx="37" cy="20.7" r="1.6" fill="#8f8f8f"/>
</svg>
<div class="a" style="left:939.5px;top:489.5px;font-size:25.6px;line-height:32px;color:#fff;font-weight:300;text-shadow:0.6px 0 0 #858585,-0.6px 0 0 #858585,0 0.6px 0 #858585,0 -0.6px 0 #858585">非我所有</div>
<div class="a" style="left:1045px;top:506px;width:29.5px;height:42px;background:#1d1d1d"></div>
<div class="a" style="left:1049.5px;top:518px;width:20px;height:20px;background:#2b2b2b;border-radius:3px"></div>
<div id="task" class="a"></div>
</div></body></html>
